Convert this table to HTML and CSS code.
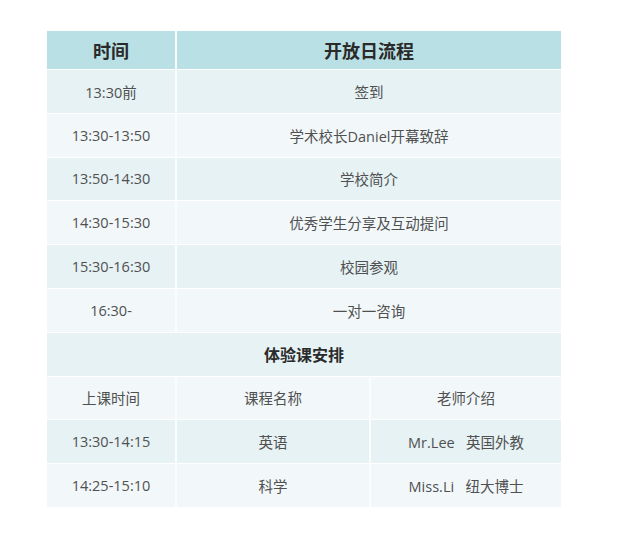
FILE: index.html
```html
<!DOCTYPE html>
<html>
<head>
<meta charset="utf-8">
<link rel="stylesheet" href="styles.css">
</head>
<body>
<table class="schedule">
  <colgroup>
    <col class="c1">
    <col class="c2">
    <col class="c3">
  </colgroup>
  <tr class="head"><th>时间</th><th colspan="2">开放日流程</th></tr>
  <tr class="odd"><td>13:30前</td><td colspan="2">签到</td></tr>
  <tr class="even"><td>13:30-13:50</td><td colspan="2">学术校长Daniel开幕致辞</td></tr>
  <tr class="odd"><td>13:50-14:30</td><td colspan="2">学校简介</td></tr>
  <tr class="even"><td>14:30-15:30</td><td colspan="2">优秀学生分享及互动提问</td></tr>
  <tr class="odd"><td>15:30-16:30</td><td colspan="2">校园参观</td></tr>
  <tr class="even"><td>16:30-</td><td colspan="2">一对一咨询</td></tr>
  <tr class="odd sub"><td colspan="3">体验课安排</td></tr>
  <tr class="even"><td>上课时间</td><td>课程名称</td><td>老师介绍</td></tr>
  <tr class="odd"><td>13:30-14:15</td><td>英语</td><td>Mr.Lee&nbsp;&nbsp; 英国外教</td></tr>
  <tr class="even"><td>14:25-15:10</td><td>科学</td><td>Miss.Li&nbsp;&nbsp; 纽大博士</td></tr>
</table>
</body>
</html>
```
FILE: styles.css
```css
body {
  margin: 0;
  background: #ffffff;
  font-family: "Open Sans", "Noto Sans CJK SC", sans-serif;
}
.schedule {
  margin: 31px 0 0 47px;
  width: 514px;
  border-collapse: collapse;
  table-layout: fixed;
  color: #505050;
  font-size: 14.5px;
}
.c1 { width: 129px; }
.c2 { width: 194px; }
.c3 { width: 191px; }
.schedule th,
.schedule td {
  text-align: center;
  padding: 0;
  border-left: 2px solid #fbfdfd;
  border-right: 2px solid #fbfdfd;
  border-top: 1px solid #ffffff;
}
.schedule tr > :first-child { border-left: none; }
.schedule tr > :last-child { border-right: none; }
.head th {
  height: 38px;
  background: #b9e0e4;
  font-size: 18px;
  font-weight: bold;
  color: #2a2a2a;
  border-top: none;
}
.odd td { background: #e6f2f4; height: 42.8px; }
.even td { background: #f2f8fa; height: 42.8px; }
.sub td {
  font-size: 16px;
  font-weight: bold;
  color: #2a2a2a;
}
```
